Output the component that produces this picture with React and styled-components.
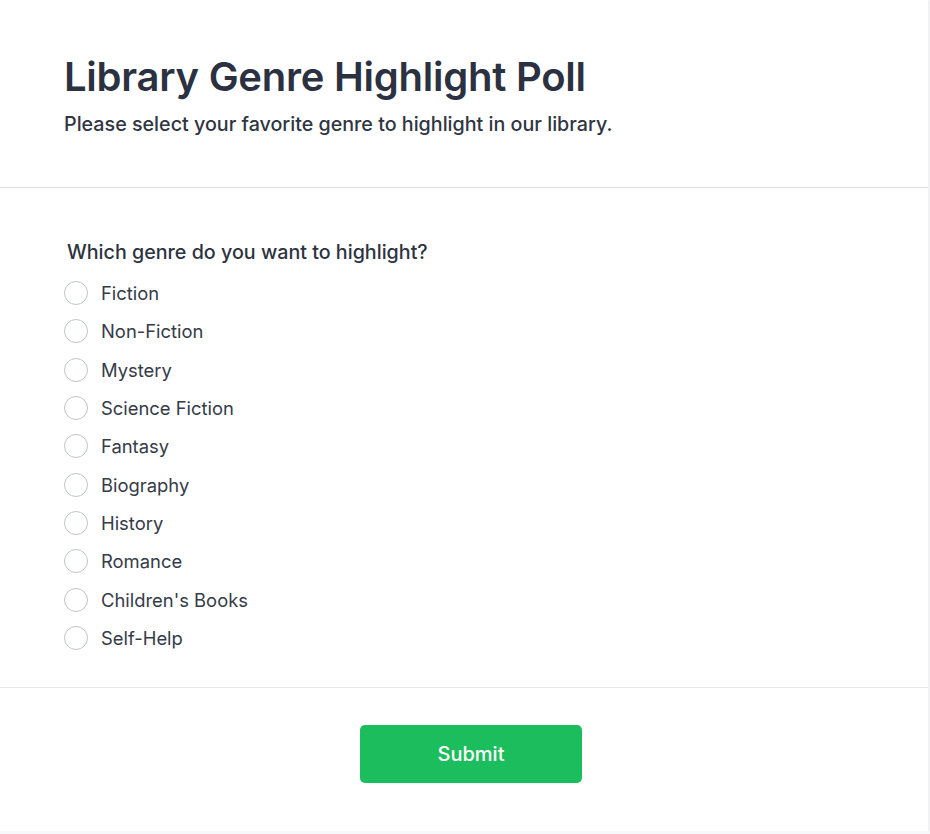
import React from "react"
import styled, { createGlobalStyle } from "styled-components"

const GlobalStyle = createGlobalStyle`
  html, body {
    margin: 0;
    padding: 0;
    background: #f7f8fa;
    font-family: Inter, "Noto Sans", sans-serif;
  }
`

const genres = [
  "Fiction",
  "Non-Fiction",
  "Mystery",
  "Science Fiction",
  "Fantasy",
  "Biography",
  "History",
  "Romance",
  "Children's Books",
  "Self-Help",
]

const App = () => {
  return (
    <>
      <GlobalStyle />
      <Card>
        <Header>
          <Title>Library Genre Highlight Poll</Title>
          <Subtitle>Please select your favorite genre to highlight in our library.</Subtitle>
        </Header>
        <Body>
          <Question>Which genre do you want to highlight?</Question>
          <Options>
            {genres.map((g) => (
              <Option key={g}>
                <Radio type="radio" name="genre" value={g} />
                <span>{g}</span>
              </Option>
            ))}
          </Options>
        </Body>
        <Footer>
          <SubmitButton type="button">Submit</SubmitButton>
        </Footer>
      </Card>
    </>
  )
}

const Card = styled.div`
  width: 928px;
  background: #fff;
  box-shadow: 0 1px 3px rgba(0, 0, 0, 0.06), 0 0 0 1px rgba(0, 0, 0, 0.015);
  color: #2d3340;
`

const Header = styled.header`
  padding: 53px 64px 49px;
  border-bottom: 1px solid #dde0e8;
`

const Title = styled.h1`
  margin: 0 0 9px;
  font-size: 40px;
  line-height: 48px;
  font-weight: 600;
  letter-spacing: -0.25px;
  color: #2b3140;
`

const Subtitle = styled.p`
  margin: 0;
  font-size: 19.7px;
  line-height: 28px;
  font-weight: 500;
  color: #2f3542;
`

const Body = styled.section`
  padding: 50px 64px 35px;
  border-bottom: 1px solid #e7e9ef;
`

const Question = styled.div`
  margin: 0 0 13px 3px;
  font-size: 19.7px;
  line-height: 28px;
  font-weight: 500;
  color: #2d3340;
`

const Options = styled.div`
  display: flex;
  flex-direction: column;
  gap: 10.33px;
`

const Option = styled.label`
  display: flex;
  align-items: center;
  gap: 13px;
  height: 28px;
  font-size: 18.4px;
  color: #353b48;
  cursor: pointer;
`

const Radio = styled.input`
  appearance: none;
  margin: 0;
  width: 24px;
  height: 24px;
  border: 1.5px solid #bfc3cc;
  border-radius: 50%;
  background: #fff;
  box-sizing: border-box;
  &:checked {
    border: 7px solid #1cbe5d;
  }
`

const Footer = styled.footer`
  display: flex;
  justify-content: center;
  padding: 37px 0 48px;
`

const SubmitButton = styled.button`
  width: 222px;
  height: 58px;
  margin-left: 14px;
  border: none;
  border-radius: 5px;
  background: #1bbd5c;
  color: #fff;
  font-family: Inter, "Noto Sans", sans-serif;
  font-size: 20px;
  font-weight: 500;
  cursor: pointer;
`

export default App
